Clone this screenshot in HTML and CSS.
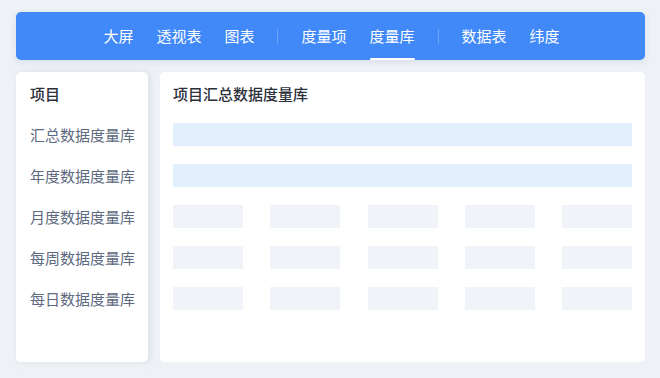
FILE: index.html
```html
<!DOCTYPE html>
<html lang="zh">
<head>
<meta charset="utf-8">
<link rel="stylesheet" href="styles.css">
</head>
<body>
<div class="page">
  <nav class="nav">
    <span class="nav-item">大屏</span>
    <span class="nav-item">透视表</span>
    <span class="nav-item">图表</span>
    <span class="nav-sep"></span>
    <span class="nav-item">度量项</span>
    <span class="nav-item active">度量库</span>
    <span class="nav-sep"></span>
    <span class="nav-item">数据表</span>
    <span class="nav-item">纬度</span>
  </nav>
  <div class="main">
    <aside class="side">
      <div class="side-head">项目</div>
      <div class="side-item">汇总数据度量库</div>
      <div class="side-item">年度数据度量库</div>
      <div class="side-item">月度数据度量库</div>
      <div class="side-item">每周数据度量库</div>
      <div class="side-item">每日数据度量库</div>
    </aside>
    <section class="content">
      <div class="content-title">项目汇总数据度量库</div>
      <div class="rows">
        <div class="bar"></div>
        <div class="bar"></div>
        <div class="cells">
          <div class="cell"></div><div class="cell"></div><div class="cell"></div><div class="cell"></div><div class="cell"></div>
        </div>
        <div class="cells">
          <div class="cell"></div><div class="cell"></div><div class="cell"></div><div class="cell"></div><div class="cell"></div>
        </div>
        <div class="cells">
          <div class="cell"></div><div class="cell"></div><div class="cell"></div><div class="cell"></div><div class="cell"></div>
        </div>
      </div>
    </section>
  </div>
</div>
</body>
</html>
```
FILE: styles.css
```css
html, body {
  margin: 0;
  padding: 0;
}
body {
  width: 660px;
  height: 378px;
  background: #eef1f5;
  font-family: "Noto Sans CJK SC", "Noto Sans", sans-serif;
  overflow: hidden;
}
.page {
  padding: 12px 15px 0 16px;
  display: flex;
  flex-direction: column;
  gap: 12px;
}
.nav {
  height: 48px;
  background: #4189f8;
  border-radius: 5px;
  display: flex;
  justify-content: center;
  align-items: center;
  gap: 23px;
  padding-left: 2px;
  box-shadow: 0 2px 6px rgba(60, 110, 200, 0.12);
}
.nav-item {
  position: relative;
  color: #ffffff;
  font-size: 15px;
  line-height: 48px;
  height: 48px;
}
.nav-item.active::after {
  content: "";
  position: absolute;
  left: 0;
  right: 0;
  bottom: 0;
  height: 2px;
  background: #ffffff;
  border-radius: 1px;
}
.nav-sep {
  width: 1px;
  height: 15px;
  background: rgba(255, 255, 255, 0.25);
}
.main {
  display: flex;
  gap: 12px;
  height: 290px;
}
.side {
  width: 132px;
  background: #ffffff;
  border-radius: 5px;
  padding: 11px 0 0 14px;
  box-sizing: border-box;
  box-shadow: 2px 0 6px rgba(180, 190, 210, 0.35);
}
.side-head {
  font-size: 15px;
  font-weight: 500;
  color: #2b303b;
  line-height: 22px;
  margin-bottom: 19px;
}
.side-item {
  font-size: 15px;
  color: #5d6a80;
  line-height: 22px;
  margin-bottom: 19px;
}
.content {
  flex: 1;
  background: #ffffff;
  border-radius: 5px;
  padding: 11px 13px 0 13px;
  box-sizing: border-box;
}
.content-title {
  font-size: 15px;
  font-weight: 500;
  color: #2b303b;
  line-height: 22px;
  margin-bottom: 18px;
}
.rows {
  display: flex;
  flex-direction: column;
  gap: 18px;
}
.bar {
  height: 23px;
  background: #e3effd;
}
.cells {
  display: grid;
  grid-template-columns: repeat(5, 70px);
  justify-content: space-between;
}
.cell {
  height: 23px;
  background: #f0f3f7;
}
```
